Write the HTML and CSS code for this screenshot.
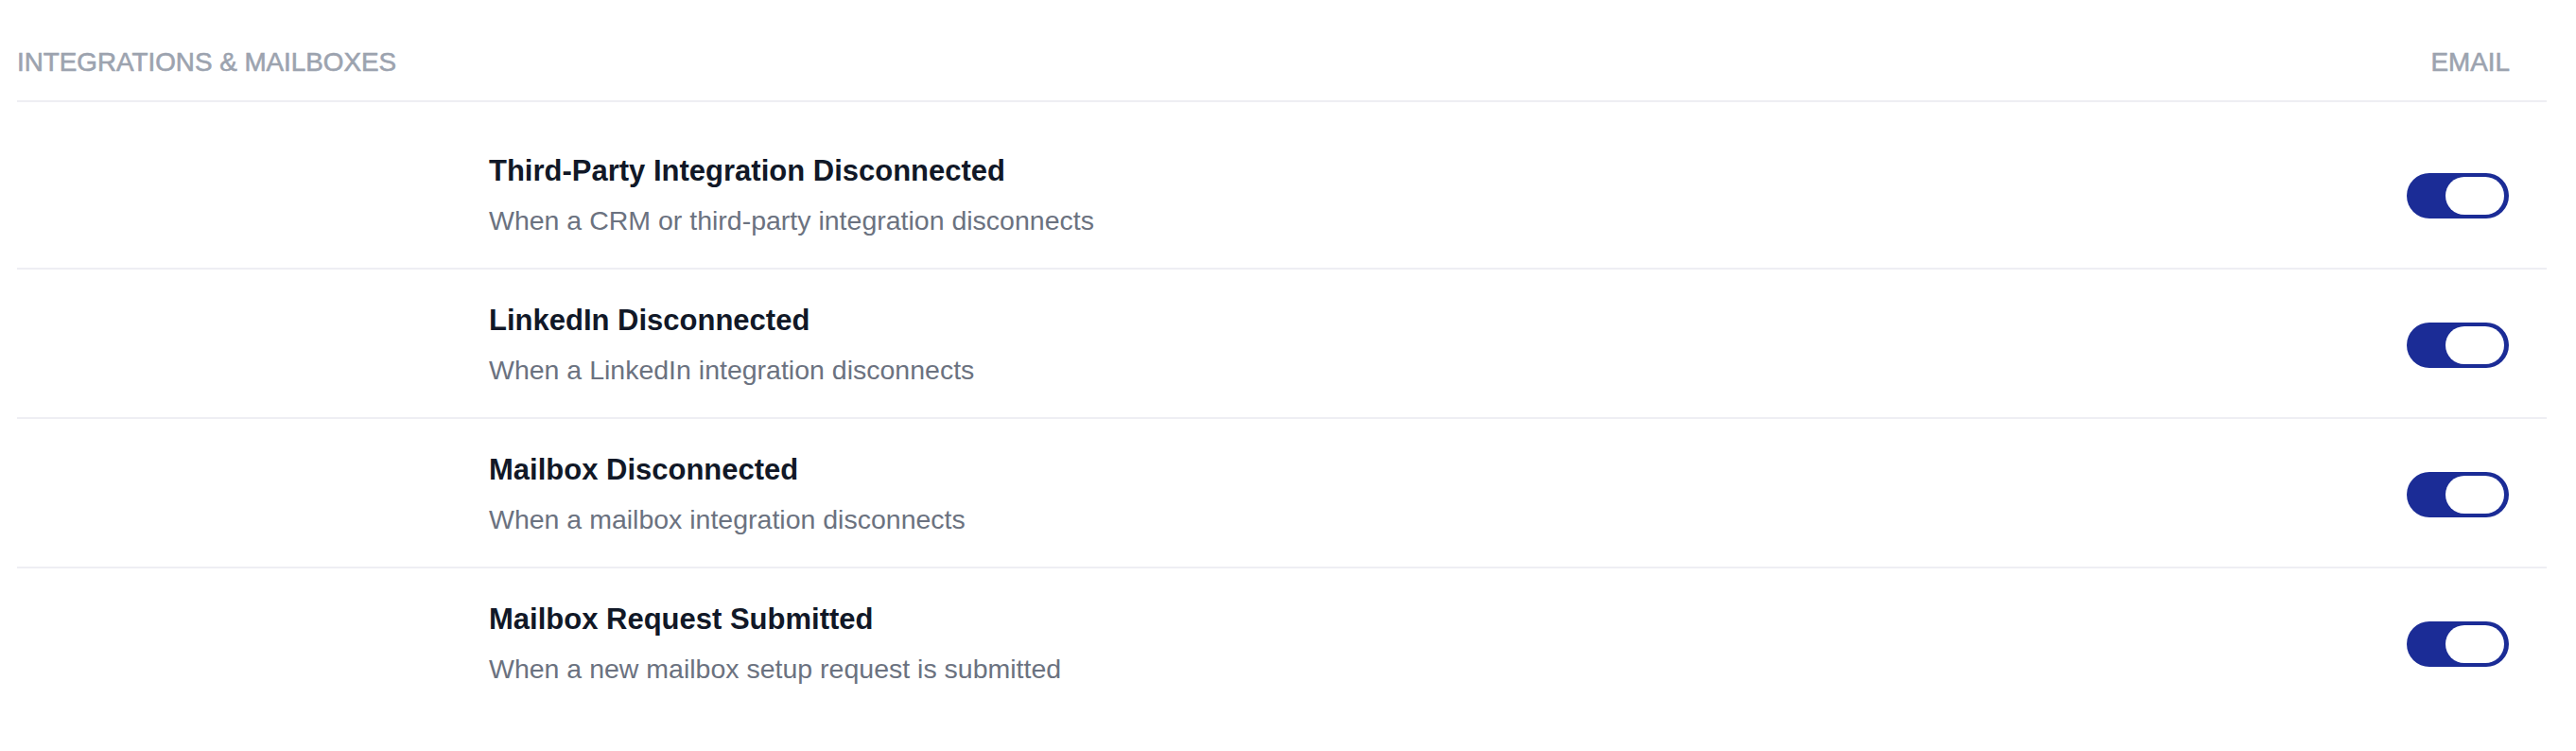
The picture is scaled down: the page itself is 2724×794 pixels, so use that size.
FILE: index.html
```html
<!DOCTYPE html>
<html lang="en">
<head>
<meta charset="utf-8">
<title>Integrations &amp; Mailboxes</title>
<link rel="stylesheet" href="styles.css">
</head>
<body>
<div class="page">
  <div class="table">
    <div class="head">
      <div class="head-label">INTEGRATIONS &amp; MAILBOXES</div>
      <div class="head-col">EMAIL</div>
    </div>
    <div class="rows">
      <div class="row">
        <div class="spacer"></div>
        <div class="text">
          <div class="title">Third-Party Integration Disconnected</div>
          <div class="desc">When a CRM or third-party integration disconnects</div>
        </div>
        <div class="cell"><span class="toggle on"><span class="knob"></span></span></div>
      </div>
      <div class="row">
        <div class="spacer"></div>
        <div class="text">
          <div class="title">LinkedIn Disconnected</div>
          <div class="desc">When a LinkedIn integration disconnects</div>
        </div>
        <div class="cell"><span class="toggle on"><span class="knob"></span></span></div>
      </div>
      <div class="row">
        <div class="spacer"></div>
        <div class="text">
          <div class="title">Mailbox Disconnected</div>
          <div class="desc">When a mailbox integration disconnects</div>
        </div>
        <div class="cell"><span class="toggle on"><span class="knob"></span></span></div>
      </div>
      <div class="row">
        <div class="spacer"></div>
        <div class="text">
          <div class="title">Mailbox Request Submitted</div>
          <div class="desc">When a new mailbox setup request is submitted</div>
        </div>
        <div class="cell"><span class="toggle on"><span class="knob"></span></span></div>
      </div>
    </div>
  </div>
</div>
</body>
</html>
```
FILE: styles.css
```css
* { box-sizing: border-box; }
html, body { margin: 0; padding: 0; background: #ffffff; }
body {
  font-family: "Liberation Sans", Arial, Helvetica, sans-serif;
  color: #111827;
}
.page {
  padding: 46px 31px 0 18px;
}
.head {
  display: flex;
  justify-content: space-between;
  align-items: flex-start;
  padding: 0 39px 20px 0;
  border-bottom: 2px solid #eeeef3;
}
.head-label, .head-col {
  font-size: 27.8px;
  line-height: 40px;
  color: #9ca3af;
  -webkit-text-stroke: 0.6px #9ca3af;
}
.rows {
  padding-top: 19px;
}
.row {
  display: grid;
  grid-template-columns: 499px 1fr auto;
  align-items: center;
  padding: 34px 40px 30px 0;
  border-bottom: 2px solid #eeeef3;
}
.row:last-child { border-bottom: none; }
.title {
  font-size: 31px;
  line-height: 40px;
  font-weight: 700;
  color: #111827;
  margin-bottom: 12px;
}
.desc {
  font-size: 28.5px;
  line-height: 40px;
  color: #6b7280;
}
.cell {
  display: flex;
  justify-content: flex-end;
}
.toggle {
  display: flex;
  align-items: center;
  justify-content: flex-end;
  width: 108px;
  height: 48px;
  padding: 4px 5px 4px 4px;
  border-radius: 24px;
  background: #1b2c96;
}
.knob {
  width: 62px;
  height: 40px;
  border-radius: 20px;
  background: #ffffff;
}
```
